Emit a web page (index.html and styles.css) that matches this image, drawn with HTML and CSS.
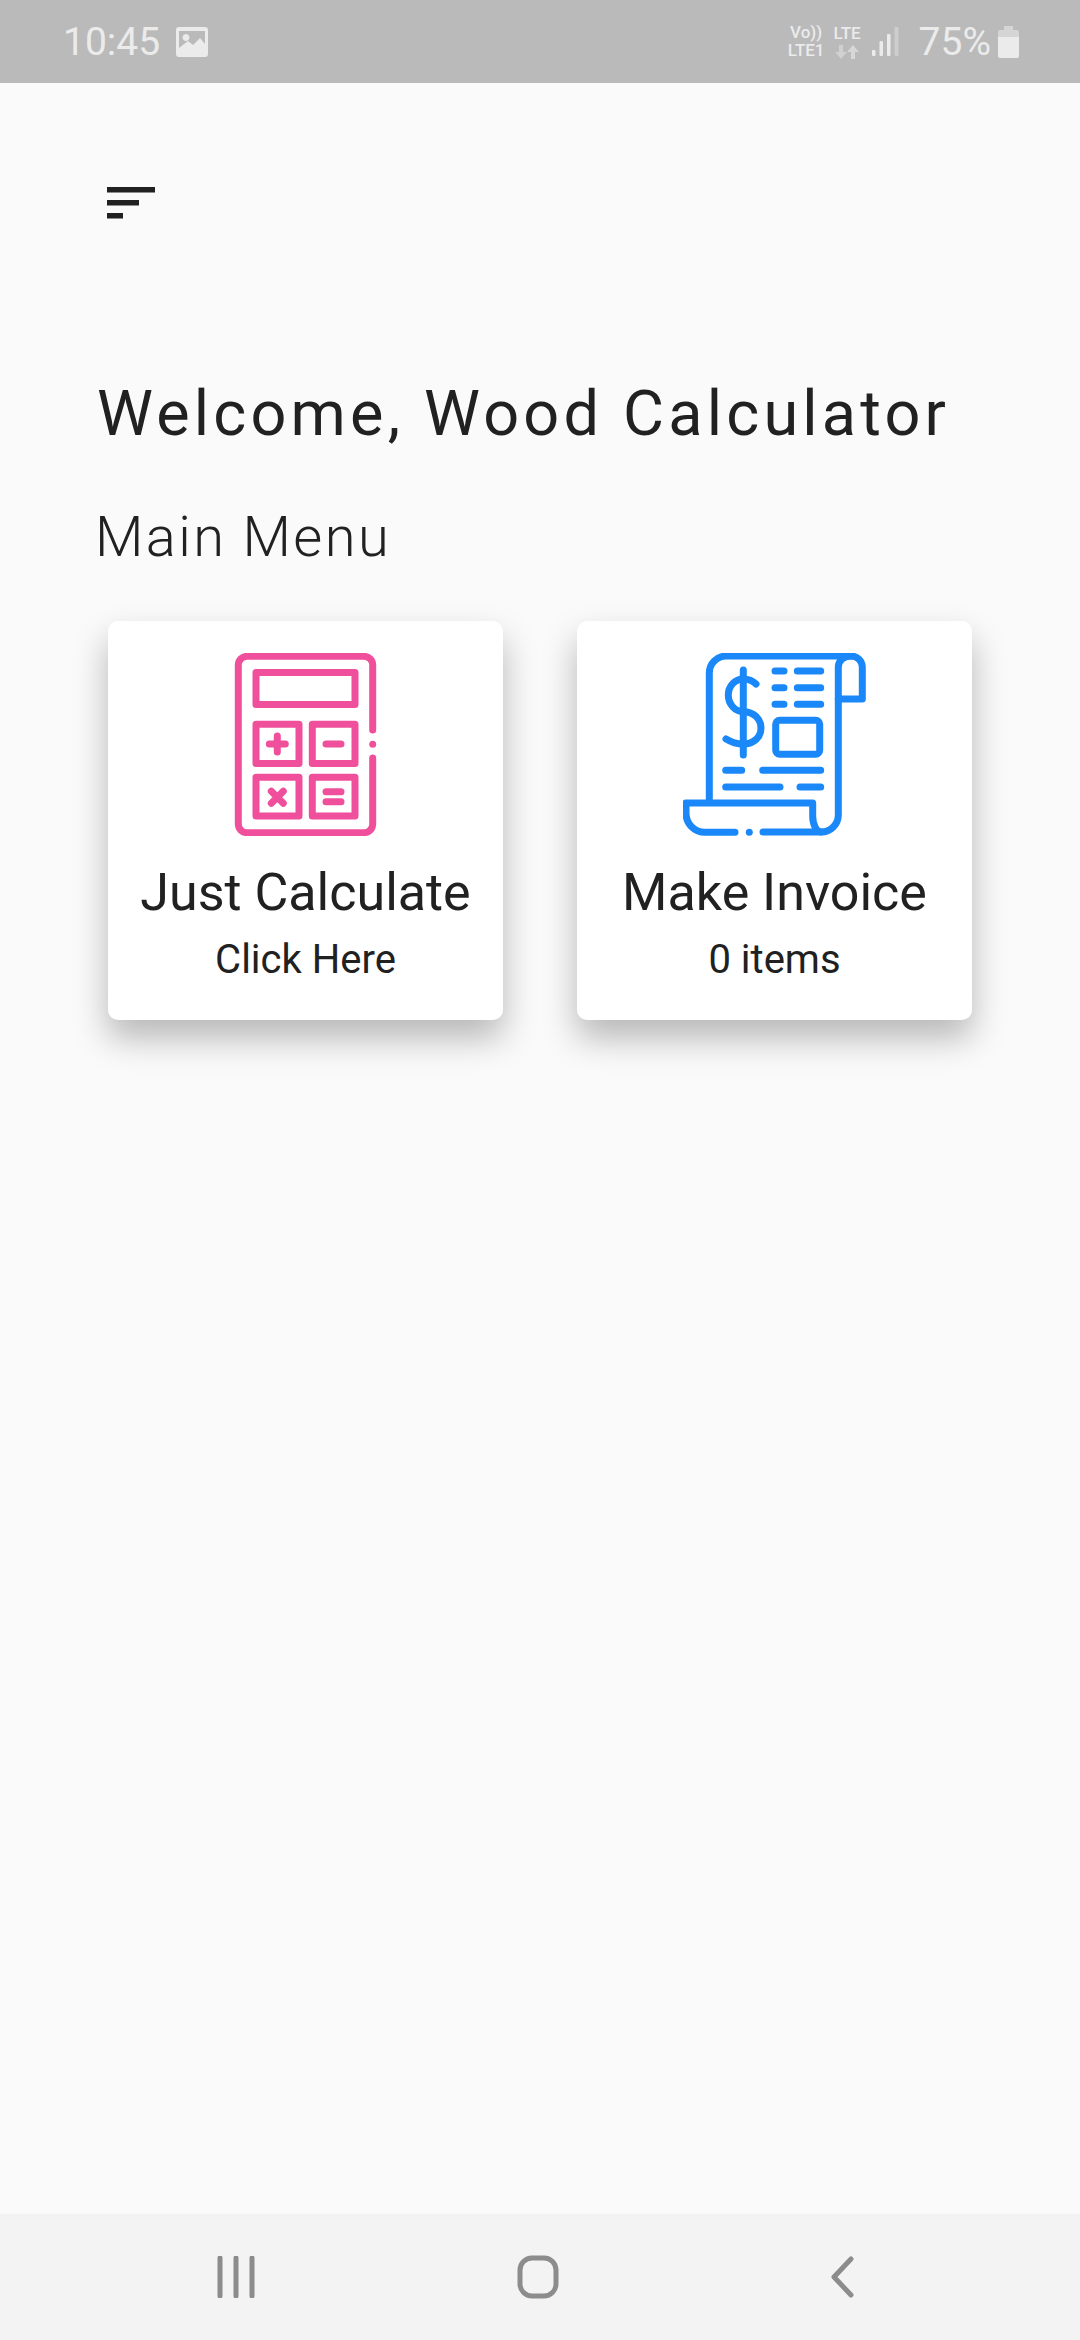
FILE: index.html
```html
<!DOCTYPE html>
<html lang="en">
<head>
    <meta charset="UTF-8">
    <meta name="viewport" content="width=device-width, initial-scale=1.0">
    <title>Wood Calculator</title>
    <link rel="stylesheet" href="styles.css">
</head>
<body>
    <div class="status-bar">
        <div class="status-left">
            <span class="status-text">10:45</span>
            <svg class="status-image" width="32" height="30" viewBox="0 0 32 30">
                <path fill-rule="evenodd" d="M3 0H29a3 3 0 0 1 3 3V27a3 3 0 0 1-3 3H3a3 3 0 0 1-3-3V3a3 3 0 0 1 3-3ZM3 21V4H29V17L24 11 17 18 12 14ZM10 7a3.500 3.500 0 1 0 0.010 0Z"/>
            </svg>
        </div>
        <div class="status-right">
            <div class="net-label">
                <span>Vo))</span>
                <span>LTE1</span>
            </div>
            <div class="net-label net-data">
                <span>LTE</span>
                <svg width="24" height="14" viewBox="0 0 24 14">
                    <path d="M4 0V7H0L6 14 12 7H8V0Z" opacity="0.45"/>
                    <path d="M16 14V7H12L18 0 24 7H20V14Z" opacity="0.6"/>
                </svg>
            </div>
            <svg class="signal" width="27" height="29" viewBox="0 0 27 29">
                <rect x="0" y="23" width="3.500" height="6" rx="1"/>
                <rect x="7.500" y="14" width="3.500" height="15" rx="1"/>
                <rect x="15" y="7" width="3.500" height="22" rx="1"/>
                <rect x="22.500" y="0" width="4" height="29" rx="1" opacity="0.4"/>
            </svg>
            <span class="status-text">75%</span>
            <svg width="21" height="32" viewBox="0 0 21 32">
                <path d="M6 0H15V4H19a2 2 0 0 1 2 2V11H0V6a2 2 0 0 1 2-2H6Z" opacity="0.55"/>
                <path d="M0 11H21V30a2 2 0 0 1-2 2H2a2 2 0 0 1-2-2Z"/>
            </svg>
        </div>
    </div>

    <main class="content">
        <svg class="menu-icon" width="48" height="32" viewBox="0 0 48 32">
            <rect x="0" y="0" width="48" height="5.500"/>
            <rect x="0" y="13" width="32" height="5.500"/>
            <rect x="0" y="26" width="16" height="5.500"/>
        </svg>

        <h1 class="welcome">Welcome, Wood Calculator</h1>
        <h2 class="section-title">Main Menu</h2>

        <div class="menu-grid">
            <div class="menu-card">
                <svg class="card-icon calc-icon" viewBox="0 0 183 183">
                    <path d="M158.700 77V12a8.700 8.700 0 0 0-8.700-8.700H33a8.700 8.700 0 0 0-8.700 8.700V171a8.700 8.700 0 0 0 8.700 8.700H150a8.700 8.700 0 0 0 8.700-8.700V105"/>
                    <path d="M158.700 91.300h0.010"/>
                    <rect x="42" y="19.600" width="99" height="31.800"/>
                    <rect x="42" y="71.300" width="43" height="39.100"/>
                    <rect x="98.300" y="71.300" width="42.700" height="39.100"/>
                    <rect x="42" y="124.300" width="43" height="38.700"/>
                    <rect x="98.300" y="124.300" width="42.700" height="38.700"/>
                    <path d="M55.300 91H71.300M63.300 83V99"/>
                    <path d="M112 91H127"/>
                    <path d="M57.300 138.300L69.300 150.300M69.300 138.300L57.300 150.300"/>
                    <path d="M112 138.700H127M112 148.700H127"/>
                </svg>
                <div class="card-title">Just Calculate</div>
                <div class="card-sub">Click Here</div>
            </div>

            <div class="menu-card">
                <svg class="card-icon invoice-icon" viewBox="0 0 183 183">
                    <path d="M26.300 147V20a17 17 0 0 1 17-17H168a11.300 11 0 0 1 11.300 11V46H155.300"/>
                    <path d="M168 3a12.700 11 0 0 0-12.700 11V162a17 17 0 0 1-17 17H80"/>
                    <path d="M52 179.300H22a19 19 0 0 1-19-19V150H129.700V163a8.600 16 0 0 0 8.600 16"/>
                    <path d="M66.300 179.300h0.010"/>
                    <path d="M60.300 17V102"/>
                    <path d="M73 31C69 27 65 26 60.300 26C52 26 45.300 33 45.300 42C45.300 51 52 58.700 60.300 58.700C71 58.700 78 66 78 75C78 84 71 91 60.300 91C54 91 48 89 43 86"/>
                    <path d="M92 18H101M114.300 18H137.700M92 34.700H101M114.300 34.700H137.700M92 51.300H101M114.300 51.300H137.700"/>
                    <rect x="92.700" y="67.300" width="44" height="34" rx="4"/>
                    <path d="M42.700 117.300H58.700M79.700 117.300H137.700M42.700 134H97M117 134H137.700"/>
                </svg>
                <div class="card-title">Make Invoice</div>
                <div class="card-sub">0 items</div>
            </div>
        </div>
    </main>

    <div class="nav-bar">
        <svg class="nav-icon" width="42" height="42" viewBox="0 0 42 42">
            <path d="M5 2V40M21 2V40M37 2V40"/>
        </svg>
        <svg class="nav-icon nav-home" width="42" height="44" viewBox="0 0 42 44">
            <rect x="3" y="3" width="36" height="38" rx="12"/>
        </svg>
        <svg class="nav-icon" width="26" height="42" viewBox="0 0 26 42">
            <path d="M22 3L5 21L22 39"/>
        </svg>
    </div>
</body>
</html>
```

FILE: styles.css
```css
* {
    box-sizing: border-box;
}
html, body {
    height: 100%;
}
body {
    margin: 0;
    display: flex;
    flex-direction: column;
    font-family: Roboto, sans-serif;
    color: #212121;
    background-color: #fafafa;
}

.status-bar {
    height: 83px;
    flex: none;
    display: flex;
    justify-content: space-between;
    align-items: center;
    padding: 0 61px 0 63px;
    background-color: #bababa;
    color: #ebebeb;
}
.status-bar svg {
    fill: #ebebeb;
    display: block;
}
.status-left, .status-right {
    display: flex;
    align-items: center;
}
.status-text {
    font-size: 39px;
    line-height: 46px;
}
.status-image {
    margin-left: 16px;
}
.net-label {
    display: flex;
    flex-direction: column;
    align-items: center;
    gap: 1px;
    font-size: 17px;
    line-height: 17px;
    font-weight: 500;
    margin-right: 9px;
}
.net-data svg {
    margin-top: 2px;
}
.signal {
    margin: 0 20px 0 2px;
}
.status-right .status-text {
    margin-right: 7px;
}

.content {
    flex: 1;
    padding: 104px 0 0;
}
.menu-icon {
    display: block;
    margin-left: 107px;
    fill: #212121;
}
.welcome {
    margin: 158px 0 0 97px;
    font-size: 63px;
    line-height: 74px;
    font-weight: 400;
    letter-spacing: 4.200px;
}
.section-title {
    margin: 53px 0 0 95px;
    font-size: 56px;
    line-height: 66px;
    font-weight: 300;
    letter-spacing: 2.400px;
}
.menu-grid {
    display: grid;
    grid-template-columns: 395px 395px;
    gap: 74px;
    margin: 51px 0 0 108px;
}
.menu-card {
    height: 399px;
    padding-top: 32px;
    text-align: center;
    background: #fff;
    border-radius: 10px;
    box-shadow: 0 18px 34px rgba(0,0,0,0.27);
}
.card-icon {
    display: block;
    width: 183px;
    height: 183px;
    margin: 0 auto;
    fill: none;
    stroke-width: 7;
    stroke-linecap: round;
    stroke-linejoin: round;
}
.calc-icon {
    stroke: #f0509b;
}
.invoice-icon {
    stroke: #1a88f8;
}
.card-title {
    margin-top: 26px;
    font-size: 52px;
    line-height: 61px;
}
.card-sub {
    margin-top: 13px;
    font-size: 40px;
    line-height: 47px;
}

.nav-bar {
    height: 126px;
    flex: none;
    display: flex;
    align-items: center;
    justify-content: space-between;
    padding: 0 225px 0 215px;
    background-color: #f3f3f3;
}
.nav-icon {
    fill: none;
    stroke: #8c8c8c;
    stroke-width: 5;
    stroke-linecap: round;
    stroke-linejoin: round;
}
.nav-home {
    margin-right: 10px;
}
```
